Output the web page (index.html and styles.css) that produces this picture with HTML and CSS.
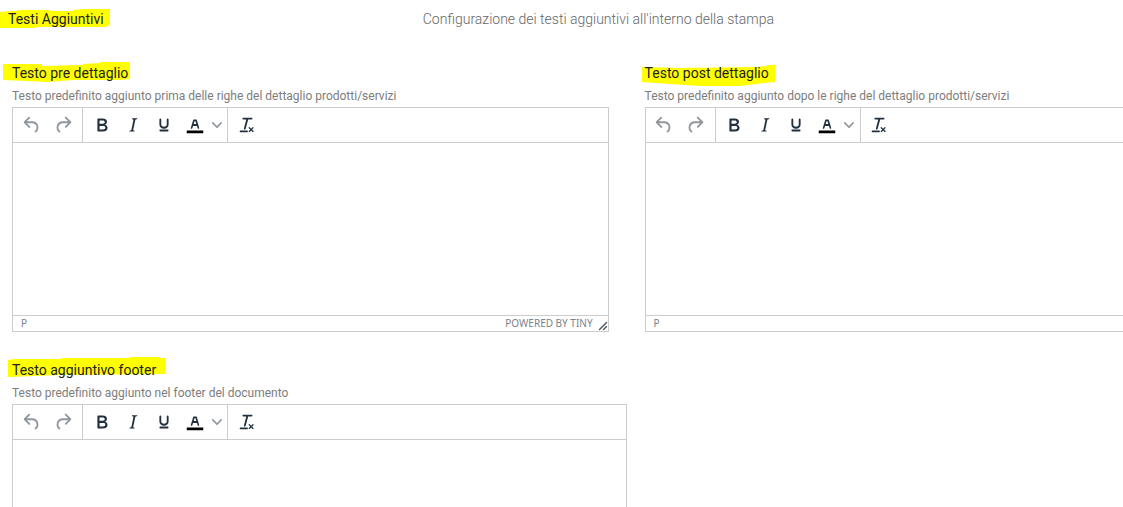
FILE: index.html
```html
<!DOCTYPE html>
<html lang="it">
<head>
    <meta charset="UTF-8">
    <meta name="viewport" content="width=device-width, initial-scale=1.0">
    <title>Testi Aggiuntivi</title>
    <link rel="stylesheet" href="styles.css">
</head>
<body>
    <!-- Icone condivise dagli editor -->
    <svg class="sprite" aria-hidden="true">
        <symbol id="undo" viewBox="0 0 24 24"><path d="M6.4 8H12c3.7 0 6.2 2 6.8 5.1.6 2.7-.4 5.6-2.3 6.8a1 1 0 01-1-1.8c1.1-.6 1.8-2.7 1.4-4.6-.5-2.1-2.1-3.5-4.9-3.5H6.4l3.3 3.3a1 1 0 11-1.4 1.4l-5-5a1 1 0 010-1.4l5-5a1 1 0 011.4 1.4L6.4 8z"/></symbol>
        <symbol id="redo" viewBox="0 0 24 24"><path d="M17.6 10H12c-2.8 0-4.4 1.4-4.9 3.5-.4 2 .3 4 1.4 4.6a1 1 0 11-1 1.8c-2-1.2-2.9-4.1-2.3-6.8.6-3 3-5.1 6.8-5.1h5.6l-3.3-3.3a1 1 0 111.4-1.4l5 5a1 1 0 010 1.4l-5 5a1 1 0 01-1.4-1.4l3.3-3.3z"/></symbol>
        <symbol id="bold" viewBox="0 0 24 24"><path d="M7.8 19c-.3 0-.5 0-.6-.2l-.2-.5V5.7c0-.2 0-.4.2-.5l.6-.2h5c1.5 0 2.7.3 3.5 1 .7.6 1.1 1.4 1.1 2.5a3 3 0 01-.6 1.9c-.4.6-1 1-1.6 1.2.4.1.9.3 1.3.6s.8.7 1 1.2c.4.4.5 1 .5 1.6 0 1.3-.4 2.3-1.3 3-.8.7-2.1 1-3.8 1H7.8zm5-8.3c.6 0 1.2-.1 1.6-.5.4-.3.6-.7.6-1.3 0-1.1-.8-1.7-2.3-1.7H9.3v3.5h3.4zm.5 6c.7 0 1.3-.1 1.7-.4.4-.4.6-.9.6-1.5s-.2-1-.7-1.4c-.4-.3-1-.4-2-.4H9.4v3.8h4z"/></symbol>
        <symbol id="italic" viewBox="0 0 24 24"><path d="M16.7 4.7l-.1.9h-.3c-.6 0-1 0-1.4.3-.3.3-.4.6-.5 1.1l-2.1 9.8v.6c0 .5.4.8 1.4.8h.2l-.2.8H8l.2-.8h.2c1.1 0 1.8-.5 2-1.5l2-9.8.1-.5c0-.6-.4-.8-1.4-.8h-.3l.2-.9h5.8z"/></symbol>
        <symbol id="underline" viewBox="0 0 24 24"><path d="M16 5c.6 0 1 .4 1 1v5.5a4 4 0 01-.4 1.8l-1 1.4a5.3 5.3 0 01-5.5 1 5 5 0 01-1.6-1c-.5-.4-.8-.9-1.1-1.4a4 4 0 01-.4-1.8V6c0-.6.4-1 1-1s1 .4 1 1v5.5c0 .3 0 .6.2 1l.6.7a3.3 3.3 0 002.2.8 3.4 3.4 0 002.2-.8c.3-.2.4-.5.6-.8l.2-.9V6c0-.6.4-1 1-1zM8 17h8c.6 0 1 .4 1 1s-.4 1-1 1H8a1 1 0 010-2z"/></symbol>
        <symbol id="color" viewBox="0 0 24 24"><path fill="#000" d="M3 18h18v3H3z"/><path d="M8.7 16h-.8a.5.5 0 01-.5-.6l2.7-9c.1-.3.3-.4.5-.4h2.8c.2 0 .4.1.5.4l2.7 9a.5.5 0 01-.5.6h-.8a.5.5 0 01-.4-.4l-.7-2.2c0-.3-.3-.4-.5-.4h-3.4c-.2 0-.4.1-.5.4l-.7 2.2c0 .3-.2.4-.4.4zm2.6-7.6l-.6 2a.5.5 0 00.5.6h1.6a.5.5 0 00.5-.6l-.6-2c0-.3-.3-.4-.5-.4h-.4c-.2 0-.4.1-.5.4z"/></symbol>
        <symbol id="chevron" viewBox="0 0 10 10"><path d="M8.7 2.2c.3-.3.8-.3 1 0 .4.4.4.9 0 1.2L5.7 7.8c-.3.3-.9.3-1.2 0L.2 3.4a.8.8 0 010-1.2c.3-.3.8-.3 1.1 0L5 6l3.7-3.8z"/></symbol>
        <symbol id="clear" viewBox="0 0 24 24"><path d="M13.2 6a1 1 0 010 .2l-2.6 10a1 1 0 01-1 .8h-.2a.8.8 0 01-.8-1l2.6-10H8a1 1 0 110-2h9a1 1 0 010 2h-3.8zM5 18h7a1 1 0 010 2H5a1 1 0 010-2zm13 1.5L16.5 18 15 19.5a.7.7 0 01-1-1l1.5-1.5-1.5-1.5a.7.7 0 011-1l1.5 1.5 1.5-1.5a.7.7 0 011 1L17.5 17l1.5 1.5a.7.7 0 01-1 1z"/></symbol>
        <symbol id="resize" viewBox="0 0 10 10"><path d="M8.1 1.1A.5.5 0 119 2l-7 7A.5.5 0 111 8l7-7zM8.1 5.1A.5.5 0 119 6l-3 3A.5.5 0 115 8l3-3z"/></symbol>
    </svg>

    <main class="page">
        <header class="page-header">
            <h1 class="title">
                <svg class="marker" aria-hidden="true"><path d="M-8 3L2 2H9V1H42V2H65V1L77 0H102V16L97 18H28V19H-8z"/></svg>
                Testi Aggiuntivi
            </h1>
            <p class="subtitle">Configurazione dei testi aggiuntivi all'interno della stampa</p>
        </header>

        <div class="fields">
            <section class="field">
                <h2 class="title">
                    <svg class="marker" aria-hidden="true"><path d="M-9 1H30V3L71 2V1L88 0V-1H118V16L108 17H61L35 19L15 18L-9 17z"/></svg>
                    <label for="testo-pre">Testo pre dettaglio</label>
                </h2>
                <p class="hint">Testo predefinito aggiunto prima delle righe del dettaglio prodotti/servizi</p>
                <div class="editor">
                    <div class="toolbar">
                        <div class="group">
                            <button type="button" class="tool" aria-label="Annulla" disabled><svg><use href="#undo"/></svg></button>
                            <button type="button" class="tool" aria-label="Ripeti" disabled><svg><use href="#redo"/></svg></button>
                        </div>
                        <div class="group">
                            <button type="button" class="tool" aria-label="Grassetto"><svg><use href="#bold"/></svg></button>
                            <button type="button" class="tool" aria-label="Corsivo"><svg><use href="#italic"/></svg></button>
                            <button type="button" class="tool" aria-label="Sottolineato"><svg><use href="#underline"/></svg></button>
                            <button type="button" class="tool" aria-label="Colore testo"><svg><use href="#color"/></svg></button>
                            <button type="button" class="tool arrow" aria-label="Scegli colore"><svg><use href="#chevron"/></svg></button>
                        </div>
                        <div class="group">
                            <button type="button" class="tool" aria-label="Cancella formattazione"><svg><use href="#clear"/></svg></button>
                        </div>
                    </div>
                    <textarea id="testo-pre" class="content"></textarea>
                    <div class="statusbar">
                        <span>P</span>
                        <a class="branding" href="#">POWERED BY TINY</a>
                        <svg class="resize"><use href="#resize"/></svg>
                    </div>
                </div>
            </section>

            <section class="field">
                <h2 class="title">
                    <svg class="marker" aria-hidden="true"><path d="M-3 4L35 5L110 4L122 3V2H130V19L119 20L95 23H55L25 21L-3 19z"/></svg>
                    <label for="testo-post">Testo post dettaglio</label>
                </h2>
                <p class="hint">Testo predefinito aggiunto dopo le righe del dettaglio prodotti/servizi</p>
                <div class="editor">
                    <div class="toolbar">
                        <div class="group">
                            <button type="button" class="tool" aria-label="Annulla" disabled><svg><use href="#undo"/></svg></button>
                            <button type="button" class="tool" aria-label="Ripeti" disabled><svg><use href="#redo"/></svg></button>
                        </div>
                        <div class="group">
                            <button type="button" class="tool" aria-label="Grassetto"><svg><use href="#bold"/></svg></button>
                            <button type="button" class="tool" aria-label="Corsivo"><svg><use href="#italic"/></svg></button>
                            <button type="button" class="tool" aria-label="Sottolineato"><svg><use href="#underline"/></svg></button>
                            <button type="button" class="tool" aria-label="Colore testo"><svg><use href="#color"/></svg></button>
                            <button type="button" class="tool arrow" aria-label="Scegli colore"><svg><use href="#chevron"/></svg></button>
                        </div>
                        <div class="group">
                            <button type="button" class="tool" aria-label="Cancella formattazione"><svg><use href="#clear"/></svg></button>
                        </div>
                    </div>
                    <textarea id="testo-post" class="content"></textarea>
                    <div class="statusbar">
                        <span>P</span>
                    </div>
                </div>
            </section>
        </div>

        <section class="field field-footer">
            <h2 class="title">
                <svg class="marker" aria-hidden="true"><path d="M-4 0L3 -1H50V-2H118V-3H148V-2H153V14L48 15L-4 17z"/></svg>
                <label for="testo-footer">Testo aggiuntivo footer</label>
            </h2>
            <p class="hint">Testo predefinito aggiunto nel footer del documento</p>
            <div class="editor">
                <div class="toolbar">
                    <div class="group">
                        <button type="button" class="tool" aria-label="Annulla" disabled><svg><use href="#undo"/></svg></button>
                        <button type="button" class="tool" aria-label="Ripeti" disabled><svg><use href="#redo"/></svg></button>
                    </div>
                    <div class="group">
                        <button type="button" class="tool" aria-label="Grassetto"><svg><use href="#bold"/></svg></button>
                        <button type="button" class="tool" aria-label="Corsivo"><svg><use href="#italic"/></svg></button>
                        <button type="button" class="tool" aria-label="Sottolineato"><svg><use href="#underline"/></svg></button>
                        <button type="button" class="tool" aria-label="Colore testo"><svg><use href="#color"/></svg></button>
                        <button type="button" class="tool arrow" aria-label="Scegli colore"><svg><use href="#chevron"/></svg></button>
                    </div>
                    <div class="group">
                        <button type="button" class="tool" aria-label="Cancella formattazione"><svg><use href="#clear"/></svg></button>
                    </div>
                </div>
                <textarea id="testo-footer" class="content"></textarea>
            </div>
        </section>
    </main>
</body>
</html>
```

FILE: styles.css
```css
* {
    box-sizing: border-box;
}
body {
    margin: 0;
    background-color: #fff;
    color: #212121;
    font-family: Roboto, sans-serif;
    font-size: 14px;
}
.sprite {
    display: none;
}
.page {
    height: 100vh;
    overflow: hidden;
    padding: 9px 0 0 12px;
}
.page-header {
    display: grid;
    grid-template-columns: 37.2% 1fr;
    margin: 0 0 34px -4px;
}
.title {
    position: relative;
    z-index: 0;
    margin: 0;
    font-size: 14px;
    font-weight: 400;
    line-height: 20px;
}
/* evidenziatore dietro al titolo */
.marker {
    position: absolute;
    top: 0;
    left: 0;
    z-index: -1;
    width: 100%;
    height: 20px;
    overflow: visible;
    fill: #ff0;
}
.subtitle {
    margin: 0;
    font-weight: 300;
    line-height: 20px;
    color: #666;
}
/* la seconda colonna prosegue oltre il bordo della finestra */
.fields {
    display: grid;
    grid-template-columns: 53.7% 53.7%;
    column-gap: 36px;
    margin-bottom: 28px;
}
.field-footer {
    width: 55.4%;
}
.hint {
    margin: 5px 0 3px;
    font-size: 12px;
    line-height: 16px;
    color: #7d7d7d;
}
.editor {
    border: 1px solid #ccc;
}
.toolbar {
    display: flex;
    height: 35px;
    border-bottom: 1px solid #ccc;
}
.group {
    display: flex;
    align-items: center;
    padding: 0 4px 0 3px;
    border-right: 1px solid #ccc;
}
.group:last-child {
    border-right: none;
}
.tool {
    display: flex;
    align-items: center;
    justify-content: center;
    width: 31px;
    height: 31px;
    padding: 0;
    border: none;
    background: none;
    fill: #222f3e;
    cursor: pointer;
}
.tool svg {
    width: 22px;
    height: 22px;
}
.tool:disabled,
.arrow {
    fill: #90979e;
}
.tool:disabled {
    cursor: default;
}
.arrow {
    width: 13px;
}
.arrow svg {
    width: 10px;
    height: 10px;
}
.content {
    display: block;
    width: 100%;
    height: 172px;
    padding: 12px;
    border: none;
    outline: none;
    resize: none;
    font-family: inherit;
    font-size: 14px;
}
.statusbar {
    display: flex;
    align-items: center;
    height: 16px;
    padding-left: 8px;
    border-top: 1px solid #ccc;
    font-family: "Noto Sans", sans-serif;
    font-size: 10px;
    line-height: 15px;
    color: #7a828d;
}
.branding {
    margin-left: auto;
    color: inherit;
    text-decoration: none;
}
.resize {
    align-self: flex-end;
    width: 10px;
    height: 10px;
    margin-left: 5px;
    fill: #4e5865;
}
```
